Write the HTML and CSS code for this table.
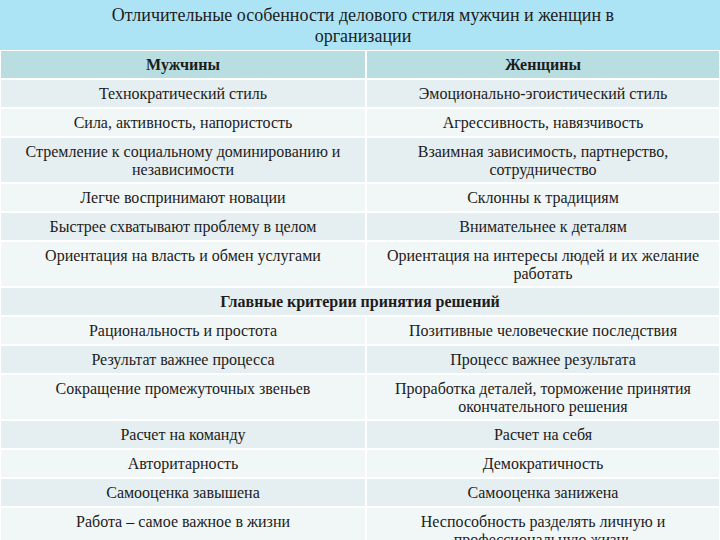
FILE: index.html
```html
<!DOCTYPE html>
<html lang="ru">
<head>
<meta charset="utf-8">
<link rel="stylesheet" href="styles.css">
</head>
<body>
<div class="title-bar">
  <div class="title">Отличительные особенности делового стиля мужчин и женщин в организации</div>
</div>
<table class="grid">
  <colgroup><col class="c1"><col class="c2"></colgroup>
  <thead>
    <tr class="head"><th>Мужчины</th><th>Женщины</th></tr>
  </thead>
  <tbody>
    <tr class="odd"><td>Технократический стиль</td><td>Эмоционально-эгоистический стиль</td></tr>
    <tr class="even"><td>Сила, активность, напористость</td><td>Агрессивность, навязчивость</td></tr>
    <tr class="odd"><td>Стремление к социальному доминированию и независимости</td><td>Взаимная зависимость, партнерство, сотрудничество</td></tr>
    <tr class="even"><td>Легче воспринимают новации</td><td>Склонны к традициям</td></tr>
    <tr class="odd"><td>Быстрее схватывают проблему в целом</td><td>Внимательнее к деталям</td></tr>
    <tr class="even"><td>Ориентация на власть и обмен услугами</td><td>Ориентация на интересы людей и их желание работать</td></tr>
    <tr class="odd span"><td colspan="2">Главные критерии принятия решений</td></tr>
    <tr class="even"><td>Рациональность и простота</td><td>Позитивные человеческие последствия</td></tr>
    <tr class="odd"><td>Результат важнее процесса</td><td>Процесс важнее результата</td></tr>
    <tr class="even"><td>Сокращение промежуточных звеньев</td><td>Проработка деталей, торможение принятия окончательного решения</td></tr>
    <tr class="odd"><td>Расчет на команду</td><td>Расчет на себя</td></tr>
    <tr class="even"><td>Авторитарность</td><td>Демократичность</td></tr>
    <tr class="odd"><td>Самооценка завышена</td><td>Самооценка занижена</td></tr>
    <tr class="even"><td>Работа – самое важное в жизни</td><td>Неспособность разделять личную и профессиональную жизнь</td></tr>
  </tbody>
</table>
</body>
</html>
```
FILE: styles.css
```css
html, body {
  margin: 0;
  padding: 0;
  background: #ffffff;
  overflow: hidden;
}
body {
  width: 720px;
  height: 540px;
  font-family: "Liberation Serif", "DejaVu Serif", serif;
  color: #1c1c1c;
}
.title-bar {
  background: #ade4f5;
  height: 50px;
  display: flex;
  justify-content: center;
  padding-left: 6px;
  box-sizing: border-box;
}
.title {
  width: 580px;
  text-align: center;
  font-size: 18px;
  line-height: 21px;
  padding-top: 5px;
}
.grid {
  width: 722px;
  margin-left: -1px;
  border-collapse: separate;
  border-spacing: 2px 2px;
  margin-top: -1px;
  font-size: 16px;
  line-height: 18px;
}
.c1 { width: 364px; }
.grid th, .grid td {
  text-align: center;
  padding: 4px 8px;
  height: 19px;
}
.grid td {
  vertical-align: top;
  padding-top: 5px;
  padding-bottom: 3px;
}
.grid th {
  vertical-align: middle;
  font-weight: bold;
  background: #b9dee1;
}
.odd td { background: #e5eef0; }
.even td { background: #f1f6f7; }
.span td { font-weight: bold; }
```
